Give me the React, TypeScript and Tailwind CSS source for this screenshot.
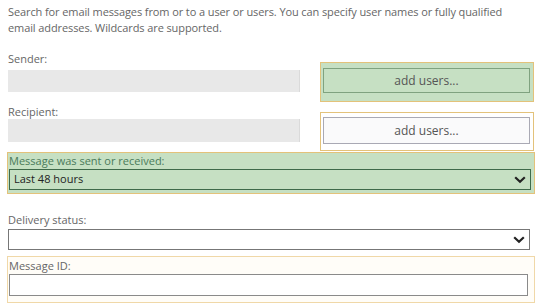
import React from "react";

const Chevron = () => (
  <svg width="12" height="8" viewBox="0 0 12 8" className="block">
    <path d="M1.2 1.2 L6 5.8 L10.8 1.2" fill="none" stroke="#222" strokeWidth="2.2" />
  </svg>
);

export default function App() {
  return (
    <div className="w-[542px] h-[307px] bg-white overflow-hidden font-['Open_Sans',sans-serif] text-[11px] text-[#666]">
      <p className="pl-[8px] pt-[4px] w-[530px] leading-[16px] tracking-[-0.1px]">
        Search for email messages from or to a user or users. You can specify user names or fully qualified email addresses. Wildcards are supported.
      </p>

      {/* Sender */}
      <div className="flex mt-[12px] h-[54px]">
        <div className="ml-[8px] w-[292px] flex flex-col">
          <div className="h-[22px] leading-[22px]">Sender:</div>
          <div className="h-[22px] bg-[#e8e8e8] border-r border-[#dadada]" />
        </div>
        <div className="ml-[20px] mt-[14px] w-[214px] h-[40px] border border-[#e3c27a] bg-[#c6e0c3] pl-[2px] pt-[5px]">
          <div className="w-[207px] h-[25px] border border-[#7fa27f] flex items-center justify-center text-[12px] text-[#555]">
            add users...
          </div>
        </div>
      </div>

      {/* Recipient */}
      <div className="flex h-[50px]">
        <div className="ml-[8px] w-[292px] flex flex-col">
          <div className="h-[17px] leading-[20px]">Recipient:</div>
          <div className="h-[23px] bg-[#e8e8e8] border-r border-[#dadada]" />
        </div>
        <div className="ml-[20px] mt-[10px] w-[214px] h-[39px] border border-[#e3c27a] bg-white pl-[2px] pt-[4px]">
          <div className="w-[207px] h-[27px] border border-[#a9a9b4] bg-[#fafafb] flex items-center justify-center text-[12px] text-[#555]">
            add users...
          </div>
        </div>
      </div>

      {/* Message sent or received */}
      <div className="ml-[7px] w-[528px] h-[42px] border border-[#e3c27a] bg-[#c6e0c3] pl-[1px]">
        <div className="h-[16px] leading-[16px] text-[#4a7a5a]">Message was sent or received:</div>
        <div className="w-[522px] h-[21px] border border-[#3f6a4a] flex items-center justify-between pl-[4px] pr-[4px] text-[#222]">
          <span>Last 48 hours</span>
          <Chevron />
        </div>
      </div>

      {/* Delivery status */}
      <div className="ml-[8px] mt-[16px] h-[19px] leading-[19px]">Delivery status:</div>
      <div className="ml-[8px] w-[522px] h-[21px] border border-[#777] flex items-center justify-end pr-[4px]">
        <Chevron />
      </div>

      {/* Message ID */}
      <div className="ml-[7px] mt-[6px] w-[528px] h-[47px] border border-[#f0d8a8] bg-[#fffdf8] pl-[1px]">
        <div className="h-[17px] leading-[18px]">Message ID:</div>
        <div className="w-[519px] h-[22px] border border-[#8a8a8a] bg-white" />
      </div>
    </div>
  );
}
